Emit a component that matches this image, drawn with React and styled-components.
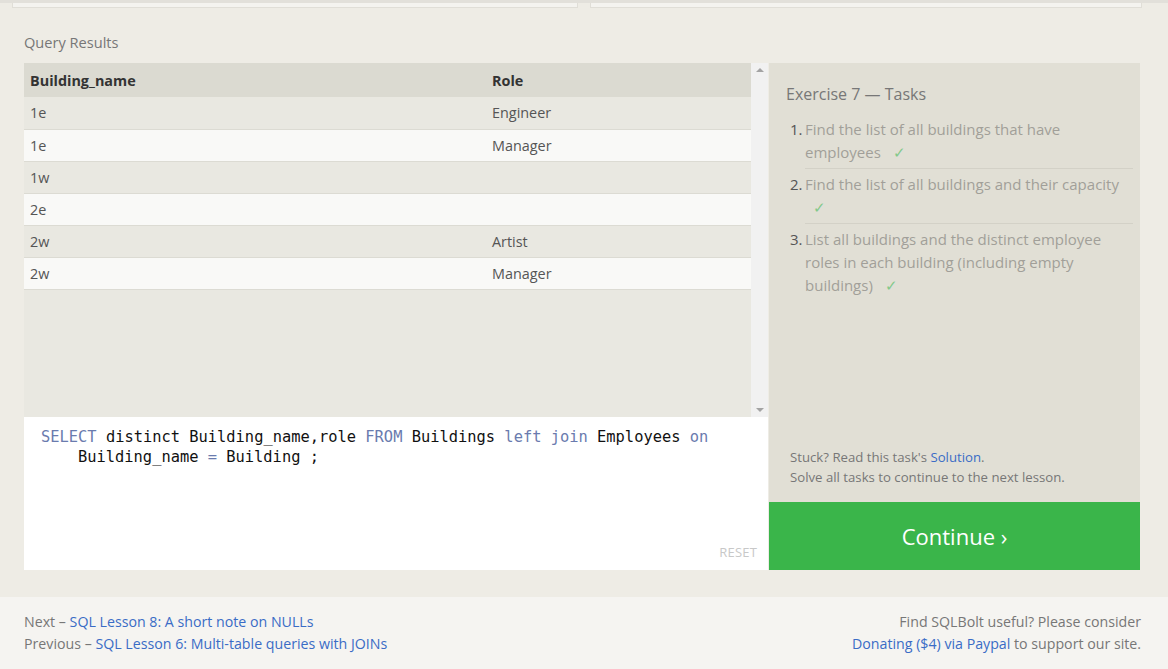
import React from "react"
import styled, { createGlobalStyle } from "styled-components"

const GlobalStyle = createGlobalStyle`
  html, body {
    margin: 0;
    padding: 0;
    background: #eeece5;
    font-family: "Open Sans", "Liberation Sans", sans-serif;
  }
  * { box-sizing: border-box; }
`

const Page = styled.div`
  width: 1168px;
  height: 669px;
  display: flex;
  flex-direction: column;
  overflow: hidden;
  background: #eeece5;
`

const TopStrip = styled.div`
  display: flex;
  gap: 12px;
  padding: 0 26px 0 12px;
  height: 8px;
  border-top: 3px solid #e2e0da;
`

const CutBox = styled.div`
  flex: ${p => p.grow};
  height: 5px;
  overflow: hidden;
  background: #f4f3ef;
  border: 1px solid #e0ded7;
  border-top: none;
`

const CutRow = styled.div`
  display: flex;
  margin-top: -13px;
  padding-left: 6px;
  font-size: 14px;
  color: #666;
  line-height: 16px;
`

const CutCell = styled.span`
  width: ${p => p.w}px;
`

const Main = styled.section`
  padding: 24px 28px 0 24px;
`

const Label = styled.div`
  font-size: 14.6px;
  color: #777;
  line-height: 20px;
  margin-bottom: 11px;
`

const Workspace = styled.div`
  display: grid;
  grid-template-columns: 744px 371px;
  column-gap: 1px;
`

const LeftCol = styled.div`
  display: flex;
  flex-direction: column;
`

const ResultsBox = styled.div`
  height: 354px;
  display: flex;
  background: #e9e8e1;
`

const TableWrap = styled.div`
  flex: 1;
`

const Table = styled.table`
  width: 100%;
  border-collapse: collapse;
  font-size: 14.4px;
`

const HeadCell = styled.th`
  text-align: left;
  font-weight: 700;
  color: #333;
  background: #dbdad1;
  height: 34px;
  padding: 0 6px;
  width: ${p => p.w || "auto"};
`

const Row = styled.tr`
  background: ${p => (p.alt ? "#f9f9f7" : "#e9e8e1")};
  border-bottom: 1px solid #dcdbd3;
`

const Cell = styled.td`
  height: 32px;
  padding: 0 6px;
  color: #555;
`

const Scrollbar = styled.div`
  width: 17px;
  background: #f1f1f1;
  display: flex;
  flex-direction: column;
  justify-content: space-between;
  align-items: center;
  padding: 5px 0;
`

const Arrow = styled.div`
  width: 0;
  height: 0;
  border-left: 4px solid transparent;
  border-right: 4px solid transparent;
  ${p =>
    p.down
      ? "border-top: 4px solid #a3a3a3;"
      : "border-bottom: 4px solid #a3a3a3;"}
`

const Editor = styled.div`
  height: 153px;
  background: #fff;
  display: flex;
  flex-direction: column;
  padding: 10px 11px 9px 17px;
`

const Code = styled.pre`
  margin: 0;
  font-family: "DejaVu Sans Mono", "Liberation Mono", monospace;
  font-size: 15.4px;
  line-height: 20px;
  color: #111;
`

const CodeLine = styled.div`
  padding-left: ${p => (p.indent ? "37px" : "0")};
`

const Kw = styled.span`
  color: #6a7bae;
`

const Reset = styled.div`
  margin-top: auto;
  align-self: flex-end;
  font-size: 13px;
  color: #c8c8c8;
  letter-spacing: 0.2px;
`

const RightCol = styled.div`
  display: flex;
  flex-direction: column;
`

const TasksPanel = styled.div`
  height: 439px;
  background: #e1dfd5;
  display: flex;
  flex-direction: column;
  padding: 20px 7px 15px 17px;
`

const TasksTitle = styled.div`
  font-size: 16px;
  color: #777;
  line-height: 22px;
`

const TaskList = styled.ol`
  margin: 9px 0 0 0;
  padding: 0 0 0 19px;
  list-style: none;
  counter-reset: task;
`

const Task = styled.li`
  position: relative;
  counter-increment: task;
  font-size: 15px;
  line-height: 23px;
  color: #a19f99;
  padding: 4px 0 4px;
  border-bottom: ${p => (p.last ? "none" : "1px solid #d3d1c7")};

  &::before {
    content: counter(task) ".";
    position: absolute;
    left: -15px;
    color: #555;
  }
`

const Check = styled.span`
  color: #83c98b;
  margin-left: 8px;
`

const StuckText = styled.div`
  margin-top: auto;
  padding-left: 4px;
  font-size: 13.2px;
  line-height: 20px;
  color: #777;
`

const Link = styled.a`
  color: #3a6cc6;
  text-decoration: none;
`

const ContinueButton = styled.div`
  height: 68px;
  background: #3ab54a;
  color: #fff;
  font-size: 22px;
  display: flex;
  align-items: center;
  justify-content: center;
`

const Footer = styled.footer`
  margin-top: 27px;
  flex: 1;
  background: #f5f4f1;
  display: flex;
  justify-content: space-between;
  padding: 14px 27px 0 24px;
  font-size: 14.2px;
  line-height: 22px;
  color: #777;
`

const FooterBlock = styled.div`
  text-align: ${p => p.align || "left"};
`

const rows = [
  ["1e", "Engineer"],
  ["1e", "Manager"],
  ["1w", ""],
  ["2e", ""],
  ["2w", "Artist"],
  ["2w", "Manager"],
]

const tasks = [
  "Find the list of all buildings that have employees",
  "Find the list of all buildings and their capacity",
  "List all buildings and the distinct employee roles in each building (including empty buildings)",
]

const App = () => (
  <Page>
    <GlobalStyle />
    <TopStrip>
      <CutBox grow={566} />
      <CutBox grow={552}>
        <CutRow>
          <CutCell w={104}>Artist</CutCell>
          <CutCell w={63}>Charles</CutCell>
          <CutCell w={77}>Dean</CutCell>
          <CutCell w={106}>3</CutCell>
          <CutCell w={40}>0</CutCell>
        </CutRow>
      </CutBox>
    </TopStrip>
    <Main>
      <Label>Query Results</Label>
      <Workspace>
        <LeftCol>
          <ResultsBox>
            <TableWrap>
              <Table>
                <thead>
                  <tr>
                    <HeadCell w="462px">Building_name</HeadCell>
                    <HeadCell>Role</HeadCell>
                  </tr>
                </thead>
                <tbody>
                  {rows.map((r, i) => (
                    <Row key={i} alt={i % 2 === 1}>
                      <Cell>{r[0]}</Cell>
                      <Cell>{r[1]}</Cell>
                    </Row>
                  ))}
                </tbody>
              </Table>
            </TableWrap>
            <Scrollbar>
              <Arrow />
              <Arrow down />
            </Scrollbar>
          </ResultsBox>
          <Editor>
            <Code>
              <CodeLine>
                <Kw>SELECT</Kw> distinct Building_name,role <Kw>FROM</Kw> Buildings{" "}
                <Kw>left</Kw> <Kw>join</Kw> Employees <Kw>on</Kw>
              </CodeLine>
              <CodeLine indent>
                Building_name <Kw>=</Kw> Building ;
              </CodeLine>
            </Code>
            <Reset>RESET</Reset>
          </Editor>
        </LeftCol>
        <RightCol>
          <TasksPanel>
            <TasksTitle>Exercise 7 — Tasks</TasksTitle>
            <TaskList>
              {tasks.map((t, i) => (
                <Task key={i} last={i === tasks.length - 1}>
                  {t} <Check>✓</Check>
                </Task>
              ))}
            </TaskList>
            <StuckText>
              Stuck? Read this task's <Link href="#">Solution</Link>.
              <br />
              Solve all tasks to continue to the next lesson.
            </StuckText>
          </TasksPanel>
          <ContinueButton>Continue ›</ContinueButton>
        </RightCol>
      </Workspace>
    </Main>
    <Footer>
      <FooterBlock>
        Next – <Link href="#">SQL Lesson 8: A short note on NULLs</Link>
        <br />
        Previous – <Link href="#">SQL Lesson 6: Multi-table queries with JOINs</Link>
      </FooterBlock>
      <FooterBlock align="right">
        Find SQLBolt useful? Please consider
        <br />
        <Link href="#">Donating ($4) via Paypal</Link> to support our site.
      </FooterBlock>
    </Footer>
  </Page>
)

export default App
